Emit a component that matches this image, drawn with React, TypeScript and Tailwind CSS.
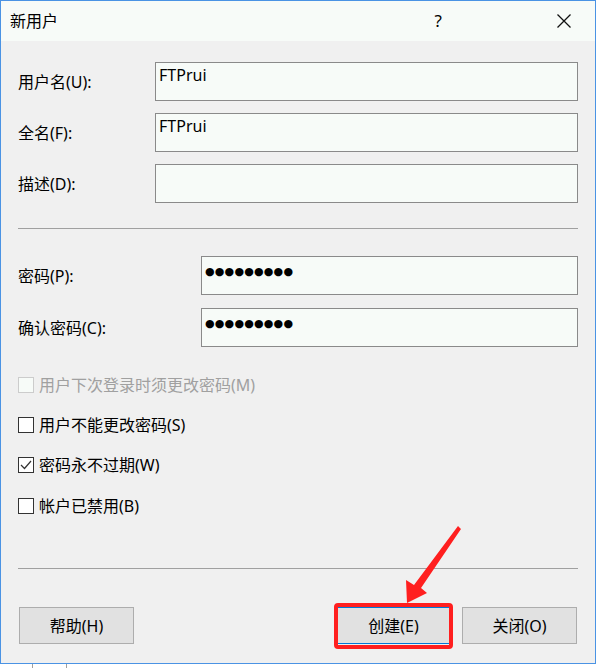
import React from "react"

const font = { fontFamily: '"Noto Sans", "Noto Sans CJK SC", sans-serif' }

function Field({ label, labelW, value, password }: { label: string; labelW: string; value?: string; password?: boolean }) {
  return (
    <div className="flex h-[39px] items-center">
      <div className={`${labelW} shrink-0 text-[16px] text-black`}>{label}</div>
      <div className="h-[39px] flex-1 border border-[#8a8a8a] bg-[#f7fbf8] px-[3px] pt-[2px] text-[16px] leading-[21px] text-black">
        {password ? (
          <span className="text-[11px] tracking-[0.2px]" style={{ fontFamily: '"DejaVu Sans", sans-serif' }}>
            {value}
          </span>
        ) : (
          value
        )}
      </div>
    </div>
  )
}

function Check({ label, checked, disabled }: { label: string; checked?: boolean; disabled?: boolean }) {
  return (
    <div className="flex h-[20px] items-center gap-[5px]">
      <div
        className={
          disabled
            ? "flex h-[16px] w-[16px] items-center justify-center border border-[#cccccc] bg-[#f7fbf8]"
            : "flex h-[16px] w-[16px] items-center justify-center border border-[#333333] bg-white"
        }
      >
        {checked && (
          <svg width="14" height="14" viewBox="0 0 14 14">
            <polyline points="2,7 5.5,10.5 12,3" fill="none" stroke="#333" strokeWidth="1.2" />
          </svg>
        )}
      </div>
      <span className={disabled ? "text-[16px] text-[#a0a0a0]" : "text-[16px] text-black"}>{label}</span>
    </div>
  )
}

export default function App() {
  return (
    <div className="relative flex h-[668px] w-[596px] flex-col bg-white" style={font}>
      <div className="flex h-[664px] flex-col border border-[#4a93e4] bg-[#f0f0f0]">
        {/* title bar */}
        <div className="flex h-[40px] items-center bg-[#f7fbf8] pl-[9px]">
          <span className="text-[16px] text-black">新用户</span>
          <span className="ml-auto mr-[114px] text-[17px] text-black">?</span>
          <svg width="16" height="16" viewBox="0 0 16 16" className="mr-[23px]">
            <path d="M1.5 1.5 L14.5 14.5 M14.5 1.5 L1.5 14.5" stroke="#111" strokeWidth="1.3" />
          </svg>
        </div>

        <div className="flex flex-1 flex-col px-[17px] pt-[21px]">
          <Field label="用户名(U):" labelW="w-[137px]" value="FTPrui" />
          <div className="mt-[12px]">
            <Field label="全名(F):" labelW="w-[137px]" value="FTPrui" />
          </div>
          <div className="mt-[12px]">
            <Field label="描述(D):" labelW="w-[137px]" value="" />
          </div>

          <div className="mt-[25px] h-px bg-[#a0a0a0]" />

          <div className="mt-[27px]">
            <Field label="密码(P):" labelW="w-[183px]" value="●●●●●●●●●" password />
          </div>
          <div className="mt-[13px]">
            <Field label="确认密码(C):" labelW="w-[183px]" value="●●●●●●●●●" password />
          </div>

          <div className="mt-[28px]">
            <Check label="用户下次登录时须更改密码(M)" disabled />
          </div>
          <div className="mt-[20px]">
            <Check label="用户不能更改密码(S)" />
          </div>
          <div className="mt-[20px]">
            <Check label="密码永不过期(W)" checked />
          </div>
          <div className="mt-[21px]">
            <Check label="帐户已禁用(B)" />
          </div>

          <div className="mt-[52px] h-px bg-[#a0a0a0]" />

          <div className="mt-[38px] flex px-[1px]">
            <button className="h-[37px] w-[115px] border border-[#adadad] bg-[#e1e1e1] text-[16px] text-black">帮助(H)</button>
            <button className="ml-auto h-[37px] w-[115px] border border-[#0078d7] bg-[#e1e1e1] text-[16px] text-black">创建(E)</button>
            <button className="ml-[11px] h-[37px] w-[115px] border border-[#adadad] bg-[#e1e1e1] text-[16px] text-black">关闭(O)</button>
          </div>
        </div>
      </div>

      {/* window behind, bottom strip */}
      <div className="flex h-[4px]">
        <div className="ml-[32px] w-px bg-[#a0a0a0]" />
        <div className="ml-[33px] w-px bg-[#a0a0a0]" />
      </div>

      {/* annotation: red box and arrow */}
      <div className="absolute left-[334px] top-[603px] h-[46px] w-[119px] rounded-[4px] border-[4px] border-[#ff1f1f]" />
      <svg className="absolute left-0 top-0" width="596" height="668" viewBox="0 0 596 668">
        <polygon points="458,526 461,529 421,588 427,593 407,603 406,580 414,585" fill="#ff1f1f" />
      </svg>
    </div>
  )
}
